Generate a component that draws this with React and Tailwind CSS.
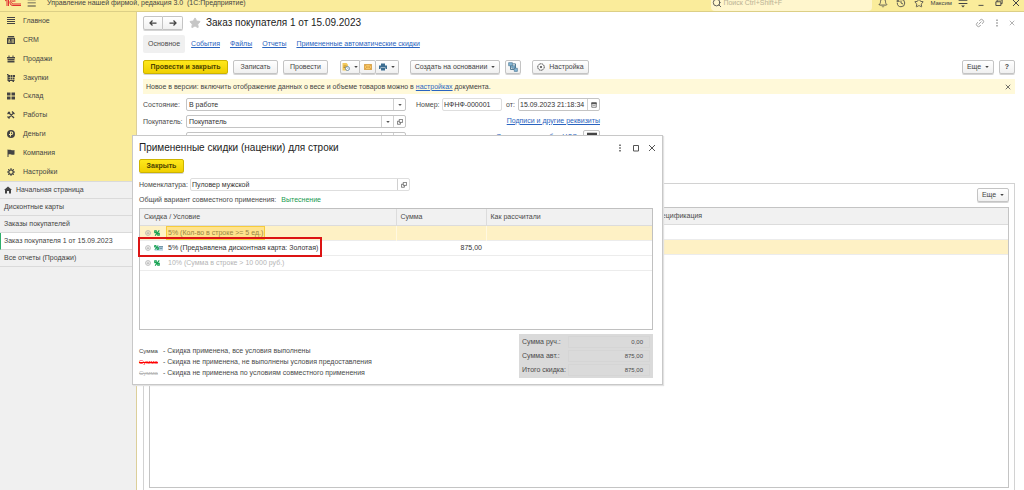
import { Bell, History, Star, Search, Link2 } from 'lucide-react';

const SECTIONS = [
  ['Главное', 'list'],
  ['CRM', 'crm'],
  ['Продажи', 'sales'],
  ['Закупки', 'cart'],
  ['Склад', 'stock'],
  ['Работы', 'tools'],
  ['Деньги', 'money'],
  ['Компания', 'flag'],
  ['Настройки', 'gear'],
];

const WINDOWS = [
  { title: 'Начальная страница', home: true },
  { title: 'Дисконтные карты' },
  { title: 'Заказы покупателей' },
  { title: 'Заказ покупателя 1 от 15.09.2023', active: true },
  { title: 'Все отчеты (Продажи)' },
];

const TABS = ['События', 'Файлы', 'Отчеты', 'Примененные автоматические скидки'];

const DISCOUNTS = [
  { text: '5% (Кол-во в строке >= 5 ед.)', sum: '', state: 'selected' },
  { text: '5% (Предъявлена дисконтная карта: Золотая)', sum: '875,00', state: 'applied' },
  { text: '10% (Сумма в строке > 10 000 руб.)', sum: '', state: 'skipped' },
];

const LEGEND = [
  ['text-[#444]', 'Скидка применена, все условия выполнены'],
  ['text-[#ff0000] line-through', 'Скидка не применена, не выполнены условия предоставления'],
  ['text-[#b8b8b8] line-through', 'Скидка не применена по условиям совместного применения'],
];

const TOTALS = [
  ['Сумма руч.:', '0,00'],
  ['Сумма авт.:', '875,00'],
  ['Итого скидка:', '875,00'],
];

const SECTION_ICONS = {
  list: <path shapeRendering="crispEdges" d="M0 0h16v2H0zM0 4h16v2H0zM0 8h16v2H0zM0 12h16v2H0z" />,
  crm: (
    <path
      fillRule="evenodd"
      d="M2 0h12l1 3H1zM0 4h16v12H0zM3 7v2.500h3V7zM2 11v2h5v-2zM9 7v2h5V7zM9 11v2h5v-2z"
    />
  ),
  sales: <path d="M3 1h2v3h6V1h2v3h3v3H0V4h3zM1 8h14v2H1zM1 11h14v4H1z" />,
  cart: (
    <path d="M0 0h3v2h4v4H3v1h4v4H3v1h12v2h-1v2h-3v-2H6v2H3v-2H1V2H0zM8 2h3v4H8zM12 2h4v4h-4zM8 7h3v4H8zM12 7h3v4h-3z" />
  ),
  stock: <path d="M0 1h7v6H0zM9 1h7v6H9zM0 9h7v6H0zM9 9h7v6H9z" />,
  tools: (
    <path
      d="M2 2l12 12M14 3L3 14M1 6l5-4M10 1l5 5M1 11l4 4"
      fill="none"
      stroke="currentColor"
      strokeWidth="2.500"
    />
  ),
  money: (
    <path
      fillRule="evenodd"
      d="M8 0a8 8 0 1 1 0 16A8 8 0 0 1 8 0zM6 3v5H4v2h2v3h2v-3h1a3.500 3.500 0 0 0 0-7zM8 5h1a1.500 1.500 0 0 1 0 3H8z"
    />
  ),
  flag: <path d="M1 1h2v1c4-2 6 2 12 0v9c-6 2-8-2-12 0v5H1z" />,
  gear: (
    <g fill="none" stroke="currentColor">
      <circle cx="8" cy="8" r="4.500" strokeWidth="2.500" />
      <path
        d="M8 0v3M8 13v3M0 8h3M13 8h3M2.300 2.300l2.200 2.200M11.500 11.500l2.200 2.200M13.700 2.300l-2.200 2.200M4.500 11.500l-2.200 2.200"
        strokeWidth="2"
      />
    </g>
  ),
};

function Glyph({ children, className = 'size-2' }) {
  return (
    <svg viewBox="0 0 16 16" fill="currentColor" className={`shrink-0 ${className}`} aria-hidden="true">
      {children}
    </svg>
  );
}

const Caret = () => (
  <Glyph className="size-1">
    <path d="M1 4h14l-7 8z" />
  </Glyph>
);

const Close = ({ className = 'size-2' }) => (
  <Glyph className={className}>
    <path d="M2 2l12 12M14 2L2 14" stroke="currentColor" strokeWidth="2" />
  </Glyph>
);

const Dots = () => (
  <Glyph>
    <path d="M6.500 1h3v3h-3zM6.500 6.500h3v3h-3zM6.500 12h3v3h-3z" />
  </Glyph>
);

const OpenIcon = () => (
  <Glyph className="size-1.5">
    <path d="M6 1h9v8H6zM6 6H1v8h8V9" fill="none" stroke="currentColor" strokeWidth="2" />
  </Glyph>
);

const Percent = () => (
  <Glyph className="size-1.5 text-[#12a150]">
    <g fill="none" stroke="currentColor" strokeWidth="3">
      <path d="M14 1L3 15M1 7h5V2H2v5M10 9v5h4V9z" />
    </g>
  </Glyph>
);

// процент поверх дисконтной карты
const CardPercent = () => (
  <svg viewBox="0 0 27 18" className="h-1.5 w-[9px] shrink-0" aria-hidden="true">
    <path d="M8 3h19v14H2v-5z" fill="#b8d4e4" />
    <path d="M15 4h12v3H15zM17 10h8v2h-8z" fill="#5f8296" />
    <path d="M12 1L3 14M1 6h5V1H2v5M9 8v5h5V8z" fill="none" stroke="#12a150" strokeWidth="3" />
  </svg>
);

function Button({ primary, className = '', children, ...rest }) {
  const look = primary
    ? 'border-[#cdb400] bg-linear-to-b from-[#ffe81a] to-[#f0d000] font-bold text-[#4d4400]'
    : 'border-[#c4c4c4] bg-linear-to-b from-white to-[#f0f0f0] text-[#444]';
  return (
    <button
      type="button"
      className={`flex h-3.5 shrink-0 items-center justify-center gap-1 rounded-xs border shadow-[0_1px_0_#d4d4d4] ${look} ${className}`}
      {...rest}
    >
      {children}
    </button>
  );
}

function TopBar() {
  return (
    <header className="flex h-3 shrink-0 items-center overflow-hidden border-b border-[#dccf86] bg-[#faec9b] pr-1 pb-[5px] pl-[5px] text-[#444]">
      <svg viewBox="0 0 32 16" className="h-2 w-4 shrink-0" fill="none" stroke="#e03030" strokeWidth="2">
        <path d="M0 4l4-3v13M7 0v14M21 4a6 6 0 1 0-5 9h16M19 6a3 3 0 1 0-3 4h16" />
      </svg>
      <button type="button" aria-label="Меню" className="ml-1.5 flex">
        <Glyph className="size-2.5">
          <path d="M1 2h13v1.500H1zM1 7h13v1.500H1zM1 12h13v1.500H1z" />
        </Glyph>
      </button>
      <h1 className="ml-2.5 whitespace-pre">Управление нашей фирмой, редакция 3.0  (1С:Предприятие)</h1>
      <label className="ml-auto flex h-4 w-[161px] items-center gap-px rounded-sm bg-[#fff6cd] pl-px">
        <Search className="size-2.5" aria-label="Поиск" />
        <input placeholder="Поиск Ctrl+Shift+F" className="min-w-0 flex-1 outline-none placeholder:text-[#b9b294]" />
      </label>
      <div className="ml-1.5 flex items-center gap-2">
        <button type="button" aria-label="Уведомления"><Bell className="size-2.5" /></button>
        <button type="button" aria-label="История"><History className="size-2.5" /></button>
        <button type="button" aria-label="Избранное"><Star className="size-2.5" /></button>
      </div>
      <span className="ml-1.5 text-[6px]">Максим</span>
      <div className="ml-1.5 flex items-center gap-2">
        <button type="button" aria-label="Настройки окна">
          <Glyph className="size-2.5">
            <path d="M1 3h14v1.500H1zM1 8h14v1.500H1zM5 12h6l-3 3z" />
          </Glyph>
        </button>
        <button type="button" aria-label="Свернуть">
          <Glyph className="size-2.5"><path d="M4 11h8v1.500H4z" /></Glyph>
        </button>
        <button type="button" aria-label="Развернуть">
          <Glyph className="size-2.5">
            <path d="M3 6h8v6H3zM5 6V3h8v6h-2" fill="none" stroke="currentColor" strokeWidth="1.500" />
          </Glyph>
        </button>
        <button type="button" aria-label="Закрыть программу"><Close /></button>
      </div>
    </header>
  );
}

function Sidebar() {
  return (
    <aside className="flex w-[137px] shrink-0 flex-col border-r border-[#dccf9a] bg-[#f0f0f0] text-[#444]">
      <nav className="grid h-[169px] auto-rows-fr bg-[#faec9b]">
        {SECTIONS.map(([name, icon]) => (
          <a key={name} href="#" className="flex items-center gap-2 pl-[7px]">
            <Glyph>{SECTION_ICONS[icon]}</Glyph>
            {name}
          </a>
        ))}
      </nav>
      <nav className="border-t border-[#dadada]">
        {WINDOWS.map((w) => (
          <a
            key={w.title}
            href="#"
            className={`flex h-[17px] items-center gap-1 border-b border-[#dadada] ${
              w.active ? 'border-l border-l-[#2fae6b] bg-white pl-[3px]' : 'pl-1'
            }`}
          >
            {w.home && (
              <Glyph>
                <path d="M8 1l8 7h-2v7h-4v-5H6v5H2V8H0z" />
              </Glyph>
            )}
            {w.title}
          </a>
        ))}
      </nav>
    </aside>
  );
}

function CommandBar() {
  return (
    <div className="mt-[7px] flex items-center">
      <Button primary className="w-[85px]">Провести и закрыть</Button>
      <Button className="ml-[5px] w-[45px]">Записать</Button>
      <Button className="ml-[5px] w-[45px]">Провести</Button>
      <div className="ml-3 flex">
        <Button className="w-5 rounded-r-none" aria-label="Создать связанный документ">
          <Glyph>
            <path d="M1 0h8l3 3v12H1z" fill="#f3c95c" />
            <path d="M3 6h6M3 9h4" stroke="#a77b20" strokeWidth="1.500" />
            <circle cx="11" cy="11" r="4" fill="#fff" stroke="#507a9d" strokeWidth="1.500" />
            <path d="M11 9v2h2" fill="none" stroke="#507a9d" />
          </Glyph>
          <Caret />
        </Button>
        <Button className="w-4 rounded-none border-l-0" aria-label="Отправить по почте">
          <Glyph>
            <path d="M1 3h14v10H1z" fill="#f7c766" stroke="#d29534" strokeWidth="1.500" />
            <path d="M1 3l7 6 7-6M1 13l5-5M15 13l-5-5" fill="none" stroke="#c9852b" />
          </Glyph>
        </Button>
        <Button className="w-[23px] rounded-l-none border-l-0" aria-label="Печать">
          <Glyph className="size-2 text-[#3b6d91]">
            <path d="M4 1h8v4H4zM0 5h16v7h-3V9H3v3H0zM4 10h8v5H4z" />
          </Glyph>
          <Caret />
        </Button>
      </div>
      <Button className="ml-[11px] w-[90px]">
        Создать на основании <Caret />
      </Button>
      <Button className="ml-[5px] w-4" aria-label="Структура подчиненности">
        <Glyph className="size-2.5">
          <path d="M4 5v7h6M7 3h5v7" fill="none" stroke="#49748f" strokeWidth="1.500" />
          <path d="M1 1h6v5H1zM6 6h5v4H6zM10 10h5v5h-5z" fill="#83b6d6" stroke="#49748f" />
        </Glyph>
      </Button>
      <Button className="ml-[11px] w-[57px]">
        <Glyph>
          <circle cx="8" cy="8" r="6.500" fill="none" stroke="currentColor" strokeWidth="2" strokeDasharray="3 1" />
          <circle cx="8" cy="8" r="2" />
        </Glyph>
        Настройка
      </Button>
      <Button className="ml-auto w-8">
        Еще <Caret />
      </Button>
      <Button className="ml-[5px] w-4 font-bold" aria-label="Справка">?</Button>
    </div>
  );
}

const FIELD = 'flex h-[13px] rounded-xs border border-[#c4c4c4] bg-white text-[#333]';
const PICK = 'flex w-3 shrink-0 items-center justify-center border-l border-[#d0d0d0] text-[#555]';

function OrderForm() {
  return (
    <form className="mt-1 flex h-[47px] gap-2.5">
      <div className="grid w-[263px] grid-cols-[43px_1fr] gap-y-1">
        <label htmlFor="state" className="self-center">Состояние:</label>
        <div className={FIELD}>
          <select id="state" className="min-w-0 flex-1 appearance-none pl-0.5 outline-none">
            <option>В работе</option>
          </select>
          <span className={PICK}><Caret /></span>
        </div>
        <label htmlFor="buyer" className="self-center">Покупатель:</label>
        <div className={FIELD}>
          <input id="buyer" defaultValue="Покупатель" className="min-w-0 flex-1 pl-0.5 outline-none" />
          <button type="button" aria-label="Выбрать покупателя" className={PICK}><Caret /></button>
          <button type="button" aria-label="Открыть покупателя" className={PICK}><OpenIcon /></button>
        </div>
        <label htmlFor="contract" className="self-center">Договор:</label>
        <div className={FIELD}>
          <input id="contract" className="min-w-0 flex-1 pl-0.5 outline-none" />
          <button type="button" aria-label="Выбрать договор" className={PICK}><Caret /></button>
          <button type="button" aria-label="Открыть договор" className={PICK}><OpenIcon /></button>
        </div>
      </div>
      <div className="flex w-[184px] flex-col gap-[3px]">
        <div className="flex items-center">
          <label htmlFor="number" className="w-[26px]">Номер:</label>
          <input
            id="number"
            defaultValue="НФНФ-000001"
            className="h-[13px] w-[60px] rounded-xs border border-[#dedede] pl-px text-[#333] outline-none"
          />
          <label htmlFor="date" className="ml-1">от:</label>
          <div className={`${FIELD} ml-auto w-[82px]`}>
            <input id="date" defaultValue="15.09.2023 21:18:34" className="min-w-0 flex-1 pl-px outline-none" />
            <button type="button" aria-label="Выбрать дату" className={PICK}>
              <Glyph className="size-1.5">
                <path d="M2 2h12v12H2z" fill="none" stroke="currentColor" strokeWidth="2" />
                <path d="M1 1h14v5H1zM4 9h8v1.500H4z" />
              </Glyph>
            </button>
          </div>
        </div>
        <a href="#" className="flex h-[13px] items-center self-end text-[#2a64c0] underline">
          Подписи и другие реквизиты
        </a>
        <div className="flex items-center justify-end gap-1.5 text-[#2a64c0]">
          <a href="#" className="underline">Основная цена, без НДС</a>
          <Button className="w-[17px]" aria-label="Цены и валюта">
            <Glyph className="size-2.5"><path d="M0 1h16v4H0zM0 7h16v3H0zM0 12h16v3H0z" /></Glyph>
          </Button>
        </div>
      </div>
    </form>
  );
}

function ProductsPanel() {
  return (
    <section className="mt-[38px] flex flex-1 flex-col border-x border-t border-[#d2d2d2] px-[5px] pt-1 pb-0.5">
      <Button className="w-8 self-end">
        Еще <Caret />
      </Button>
      <div className="mt-[5px] flex-1 border border-[#c4c4c4]">
        <table className="w-full table-fixed text-left">
          <thead>
            <tr className="h-4 border-b border-[#dcdcdc] bg-[#f1f1f1]">
              <th className="w-[503px]" aria-label="Номенклатура" />
              <th className="font-normal">Спецификация</th>
            </tr>
          </thead>
          <tbody>
            <tr className="h-[15px] border-b border-[#ececec]">
              <td />
              <td />
            </tr>
            <tr className="h-[15px] border-b border-[#ececec] bg-[#fef1c5]">
              <td />
              <td />
            </tr>
          </tbody>
        </table>
      </div>
    </section>
  );
}

function DiscountRow({ text, sum, state }) {
  const selected = state === 'selected';
  const color = { selected: 'text-[#978544]', applied: 'text-[#333]', skipped: 'text-[#b4b4b4]' }[state];
  const cell = selected ? 'border-r border-[#fff8e0]' : '';
  return (
    <tr className={`h-[15px] border-b border-[#ececec] ${color} ${selected ? 'bg-[#fef1c5]' : ''}`}>
      <td className={`relative ${cell}`}>
        <div className="flex items-center pl-[5px]">
          <Glyph className="size-1.5 text-[#aaa]">
            <circle cx="8" cy="8" r="6.500" fill="none" stroke="currentColor" strokeWidth="2" />
            <path d="M4 7h8v2H4zM7 4h2v8H7z" />
          </Glyph>
          <span className="ml-[3px] flex w-[13px] items-center">
            {state === 'applied' ? <CardPercent /> : <Percent />}
          </span>
          <span className={selected ? 'h-3 bg-[#ffe38c] px-px leading-3 outline outline-[#f7cc3c]' : 'px-px'}>
            {text}
          </span>
        </div>
        {state === 'applied' && (
          <div className="pointer-events-none absolute -top-1 -left-0.5 h-5 w-[184px] border-2 border-[#dc1414]" />
        )}
      </td>
      <td className={`pr-1 text-right ${cell}`}>{sum}</td>
      <td />
    </tr>
  );
}

function DiscountsDialog() {
  return (
    <div
      role="dialog"
      aria-labelledby="dialog-title"
      className="absolute top-[135px] left-[132px] flex w-[531px] flex-col border border-[#c8c8c8] bg-white px-1.5 pb-1.5 shadow-[1px_1px_1px_#e2e2e2]"
    >
      <div className="flex h-[23px] items-center text-[#555]">
        <h2 id="dialog-title" className="flex-1 text-[10px] text-[#222]">
          Примененные скидки (наценки) для строки
        </h2>
        <div className="flex items-center gap-2">
          <button type="button" aria-label="Еще"><Dots /></button>
          <button type="button" aria-label="Развернуть окно">
            <Glyph><path d="M3 3h10v11H3z" fill="none" stroke="currentColor" strokeWidth="2" /></Glyph>
          </button>
          <button type="button" aria-label="Закрыть окно"><Close /></button>
        </div>
      </div>
      <Button primary className="w-[45px]">Закрыть</Button>
      <div className="mt-[5px] flex items-center">
        <label htmlFor="item" className="w-[51px]">Номенклатура:</label>
        <div className="flex h-[13px] w-[220px] rounded-xs border border-[#dedede] text-[#333]">
          <input id="item" defaultValue="Пуловер мужской" className="min-w-0 flex-1 pl-px outline-none" />
          <button type="button" aria-label="Открыть номенклатуру" className={PICK}><OpenIcon /></button>
        </div>
      </div>
      <p className="mt-1 flex h-[10px] items-center gap-[5px]">
        Общий вариант совместного применения:
        <a href="#" className="text-[#189a50]">Вытеснение</a>
      </p>
      <div className="mt-[3px] mr-[3px] h-[122px] border border-[#c0c0c0]">
        <table className="w-full table-fixed text-left">
          <thead>
            <tr className="h-4 border-b border-[#dcdcdc] bg-[#f1f1f1]">
              <th className="w-[256px] border-r border-[#dcdcdc] pl-1 font-normal">Скидка / Условие</th>
              <th className="w-[90px] border-r border-[#dcdcdc] pl-1 font-normal">Сумма</th>
              <th className="pl-1 font-normal">Как рассчитали</th>
            </tr>
          </thead>
          <tbody>
            {DISCOUNTS.map((d) => (
              <DiscountRow key={d.text} {...d} />
            ))}
          </tbody>
        </table>
      </div>
      <div className="mt-1 mr-[3px] flex items-end justify-between">
        <ul>
          {LEGEND.map(([mark, text]) => (
            <li key={text} className="flex h-[11px] items-center">
              <span className={`w-6 text-[6px] ${mark}`}>Сумма</span>- {text}
            </li>
          ))}
        </ul>
        <dl className="w-[134px] bg-[#dadada] px-[3px] py-px">
          {TOTALS.map(([name, value]) => (
            <div key={name} className="flex h-[14px] items-center justify-between">
              <dt>{name}</dt>
              <dd className="w-[82px] border border-[#d5d5d5] pr-1.5 text-right text-[6px]">{value}</dd>
            </div>
          ))}
        </dl>
      </div>
    </div>
  );
}

export default function App() {
  return (
    <div className="relative flex h-screen flex-col overflow-hidden bg-white font-['Liberation_Sans',Arial,sans-serif] text-[7px] leading-[10px] text-[#4a4a4a]">
      <TopBar />
      <div className="flex min-h-0 flex-1">
        <Sidebar />
        <main className="flex min-w-0 flex-1 flex-col pt-1 pr-[9px] pl-1.5">
          <div className="flex h-3.5 items-center">
            <div className="flex">
              <Button className="w-5 rounded-r-none" aria-label="Назад">
                <Glyph><path d="M15 8H3M7 3L2 8l5 5" fill="none" stroke="currentColor" strokeWidth="2.500" /></Glyph>
              </Button>
              <Button className="w-5 rounded-l-none border-l-0" aria-label="Вперед">
                <Glyph><path d="M1 8h12M9 3l5 5-5 5" fill="none" stroke="currentColor" strokeWidth="2.500" /></Glyph>
              </Button>
            </div>
            <Star className="ml-1.5 size-3 fill-[#c6c6c6] text-[#c6c6c6]" />
            <h2 className="ml-[5px] text-[10px] text-[#222]">Заказ покупателя 1 от 15.09.2023</h2>
            <div className="ml-auto flex items-center gap-2 text-[#999]">
              <button type="button" aria-label="Получить ссылку"><Link2 className="size-2.5 -rotate-45" /></button>
              <button type="button" aria-label="Меню формы"><Dots /></button>
              <button type="button" aria-label="Закрыть форму"><Close className="size-1.5" /></button>
            </div>
          </div>
          <nav className="mt-[5px] flex h-[18px] items-center gap-1.5">
            <a href="#" className="flex h-full items-center rounded-xs bg-[#f0f0f0] px-[5px]">Основное</a>
            <div className="flex gap-2.5">
              {TABS.map((tab) => (
                <a key={tab} href="#" className="text-[#2a64c0] underline">{tab}</a>
              ))}
            </div>
          </nav>
          <CommandBar />
          <div className="mt-[5px] flex h-[15px] items-center justify-between bg-[#fff9d9] pr-1 pl-[3px] text-[#444]">
            <p>
              Новое в версии: включить отображение данных о весе и объеме товаров можно в{' '}
              <a href="#" className="text-[#2a64c0] underline">настройках</a> документа.
            </p>
            <button type="button" aria-label="Скрыть подсказку"><Close className="size-1.5" /></button>
          </div>
          <OrderForm />
          <ProductsPanel />
        </main>
      </div>
      <DiscountsDialog />
    </div>
  );
}
